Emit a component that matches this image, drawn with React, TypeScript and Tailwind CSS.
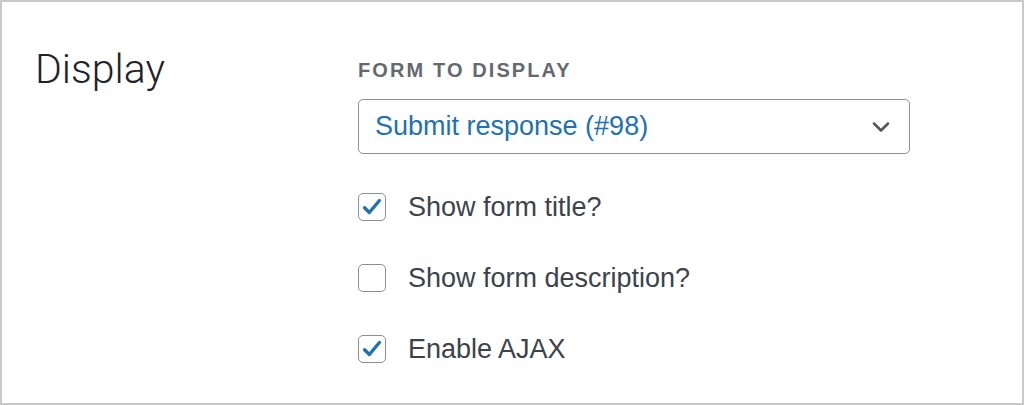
import { ChevronDown } from "lucide-react";

function CheckBox({ checked }: { checked: boolean }) {
  return (
    <span className="flex h-[28px] w-[28px] shrink-0 items-center justify-center rounded-[5px] border-[1.5px] border-[#8c8f94] bg-white">
      {checked && (
        <svg viewBox="0 0 20 20" className="h-[24px] w-[24px]">
          <path
            d="M3.8 10.6 L7.8 14.6 L16.2 4.6"
            fill="none"
            stroke="#2271b1"
            strokeWidth="2.8"
            strokeLinecap="round"
            strokeLinejoin="round"
          />
        </svg>
      )}
    </span>
  );
}

const options = [
  { label: "Show form title?", checked: true },
  { label: "Show form description?", checked: false },
  { label: "Enable AJAX", checked: true },
];

export default function App() {
  return (
    <div
      className="h-[405px] w-[1024px] border-2 border-[#c8c8c8] bg-white"
      style={{ fontFamily: '"Liberation Sans", Arial, sans-serif' }}
    >
      <div className="flex">
        <div className="w-[356px] pl-[33px] pt-[47px]">
          <h2
            className="text-[41px] font-light leading-none text-[#1d2327]"
            style={{ fontFamily: 'Roboto, "Liberation Sans", sans-serif' }}
          >
            Display
          </h2>
        </div>

        <div className="pt-[55px]">
          <div className="text-[20px] font-semibold uppercase leading-[26px] tracking-[2.1px] text-[#646970]">
            Form to display
          </div>
          <div className="mt-[16px] flex h-[55px] w-[552px] items-center justify-between rounded-[5px] border-[1.5px] border-[#8c8f94] pl-[16px] pr-[14px]">
            <span className="text-[27px] leading-none text-[#2271b1]">Submit response (#98)</span>
            <ChevronDown className="h-[28px] w-[28px] text-[#50575e]" strokeWidth={2.2} />
          </div>

          <div className="mt-[39px] flex flex-col gap-[43px]">
            {options.map((o) => (
              <label key={o.label} className="flex items-center gap-[22px]">
                <CheckBox checked={o.checked} />
                <span className="text-[27px] leading-[28px] text-[#3c434a]">{o.label}</span>
              </label>
            ))}
          </div>
        </div>
      </div>
    </div>
  );
}
